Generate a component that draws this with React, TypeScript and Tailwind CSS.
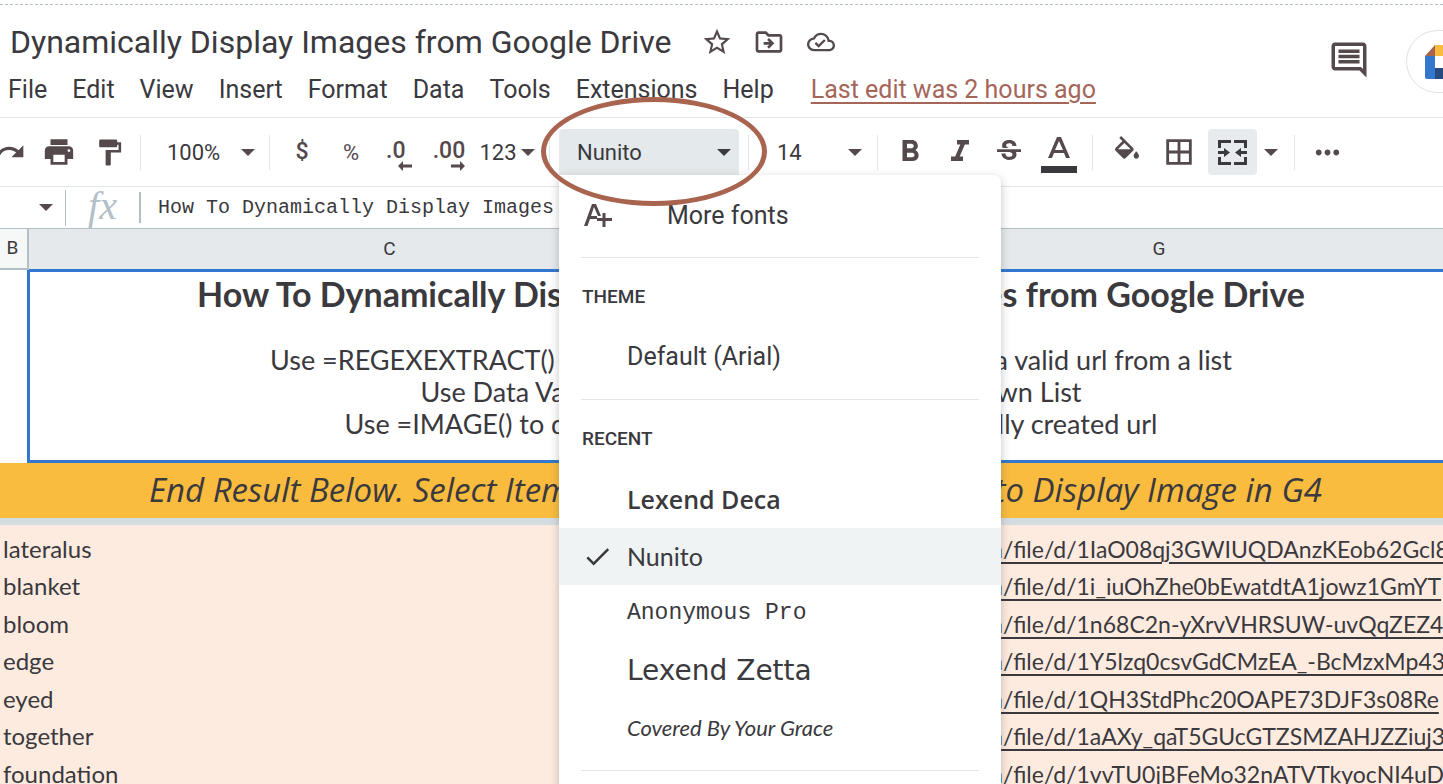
import type { ReactNode } from "react";
import {
  MdBorderAll,
  MdCheck,
  MdFormatBold,
  MdFormatItalic,
  MdFormatPaint,
  MdMoreHoriz,
  MdOutlineCloudDone,
  MdOutlineComment,
  MdOutlineDriveFileMove,
  MdPrint,
  MdRedo,
  MdStarBorder,
  MdStrikethroughS,
} from "react-icons/md";

const menus = ["File", "Edit", "View", "Insert", "Format", "Data", "Tools", "Extensions", "Help"];

const rows = [
  ["lateralus", "https://drive.google.com", "/file/d/1IaO08qj3GWIUQDAnzKEob62Gcl8"],
  ["blanket", "https://drive.google.com", "/file/d/1i_iuOhZhe0bEwatdtA1jowz1GmYT"],
  ["bloom", "https://drive.google.com", "/file/d/1n68C2n-yXrvVHRSUW-uvQqZEZ4"],
  ["edge", "https://drive.google.com", "/file/d/1Y5lzq0csvGdCMzEA_-BcMzxMp43"],
  ["eyed", "https://drive.google.com", "/file/d/1QH3StdPhc20OAPE73DJF3s08Re"],
  ["together", "https://drive.google.com", "/file/d/1aAXy_qaT5GUcGTZSMZAHJZZiuj3"],
  ["foundation", "https://drive.google.com", "/file/d/1vvTU0jBFeMo32nATVTkyocNI4uD"],
];

function Caret({ className = "" }: { className?: string }) {
  return (
    <svg viewBox="0 0 14 7" aria-hidden="true" className={`h-[7px] w-3.5 shrink-0 fill-current ${className}`}>
      <path d="M0 0h14L7 7z" />
    </svg>
  );
}

function Tool({ label, className, children }: { label: string; className: string; children: ReactNode }) {
  return (
    <button type="button" aria-label={label} className={`flex h-[46px] shrink-0 items-center justify-center ${className}`}>
      {children}
    </button>
  );
}

function Separator({ className }: { className: string }) {
  return (
    <div className={`flex shrink-0 justify-center ${className}`}>
      <div className="h-[35px] w-px bg-[#e1e6e8]" />
    </div>
  );
}

function ToolSelect({ label, value, className }: { label: string; value: string; className: string }) {
  return (
    <div className={`grid shrink-0 items-center ${className}`}>
      <select
        aria-label={label}
        defaultValue={value}
        className="col-start-1 row-start-1 w-full appearance-none bg-transparent pl-5 text-[22px] text-[#3a393e] outline-none"
      >
        <option>{value}</option>
      </select>
      <Caret className="pointer-events-none col-start-1 row-start-1 mr-2 justify-self-end" />
    </div>
  );
}

function Decimal({ digits, right = false }: { digits: string; right?: boolean }) {
  return (
    <span className="flex min-w-[26px] flex-col text-left">
      <span className="text-[23px] leading-5 font-medium">{digits}</span>
      <svg viewBox="0 0 14 10" aria-hidden="true" className={`h-2.5 w-3.5 self-end fill-current ${right ? "rotate-180" : ""}`}>
        <path d="M5 0v3.500h9v3H5V10L0 5z" />
      </svg>
    </span>
  );
}

function Header() {
  return (
    <header className="mt-1 flex justify-between border-t border-dashed border-[#b3bfc6] pt-[13px]">
      <div className="shrink-0 pb-1">
        <div className="flex h-12 items-center pl-2.5">
          <h1 className="text-[32px] leading-10 whitespace-nowrap">Dynamically Display Images from Google Drive</h1>
          <div className="ml-[30px] flex items-center gap-5 text-[#54494b]">
            <button type="button" aria-label="Star"><MdStarBorder className="size-8" /></button>
            <button type="button" aria-label="Move"><MdOutlineDriveFileMove className="size-8" /></button>
            <button type="button" aria-label="See document status" className="pl-0.5"><MdOutlineCloudDone className="size-7" /></button>
          </div>
        </div>
        <nav className="flex h-[47px] items-center gap-[25px] pl-2 text-[25px]">
          {menus.map((item) => (
            <button type="button" key={item}>{item}</button>
          ))}
          <a href="#history" className="ml-3 whitespace-nowrap text-[#a5665a] underline decoration-2 underline-offset-4">
            Last edit was 2 hours ago
          </a>
        </nav>
      </div>
      <div className="flex items-start gap-9 pt-3">
        <button type="button" aria-label="Open comment history" className="mt-[9px] text-[42px] text-[#54494b]">
          <MdOutlineComment />
        </button>
        <button
          type="button"
          aria-label="Join a call"
          className="-mr-[73px] flex h-[63px] w-[110px] shrink-0 items-center rounded-full border border-[#dde3e6] pl-[18px]"
        >
          <svg viewBox="0 0 42 34" aria-hidden="true" className="h-[34px] w-[42px]">
            <path fill="#a96450" d="M0 11 10 0v11z" />
            <path fill="#f9bc3f" d="M10 0h20v11H10z" />
            <path fill="#3377cf" d="M0 11h10v23H2a2 2 0 0 1-2-2z" />
            <path fill="#274b7f" d="M10 23h20v11H10z" />
            <path fill="#274b7f" d="M30 12 42 3v28l-12-9z" />
          </svg>
        </button>
      </div>
    </header>
  );
}

function Toolbar() {
  return (
    <div className="flex h-[70px] items-center overflow-hidden border-y border-[#e1e6e8] text-[#54494b]">
      <Tool label="Redo" className="w-[34px]">
        <MdRedo className="mr-3.5 size-8 shrink-0" />
      </Tool>
      <Tool label="Print" className="w-[50px]"><MdPrint className="size-[34px]" /></Tool>
      <Tool label="Paint format" className="w-[50px]"><MdFormatPaint className="size-[31px]" /></Tool>
      <Separator className="w-[13px]" />
      <ToolSelect label="Zoom" value="100%" className="w-[116px]" />
      <Separator className="w-[13px]" />
      <Tool label="Format as currency" className="w-[52px] text-[23px] font-medium">$</Tool>
      <Tool label="Format as percent" className="w-[46px] text-[22px]">%</Tool>
      <Tool label="Decrease decimal places" className="w-[50px] pt-2"><Decimal digits=".0" /></Tool>
      <Tool label="Increase decimal places" className="w-[50px] pt-2"><Decimal digits=".00" right /></Tool>
      <Tool label="More formats" className="w-[66px] gap-1 text-[22px] text-[#3a393e]">
        123
        <Caret className="text-[#54494b]" />
      </Tool>
      <Separator className="w-[19px]" />
      <button
        type="button"
        aria-haspopup="menu"
        aria-expanded="true"
        className="flex h-[46px] w-[180px] shrink-0 items-center justify-between rounded-t bg-[#e4e9eb] pr-2 pl-[18px] text-[22px] text-[#3a393e]"
      >
        Nunito
        <Caret />
      </button>
      <Separator className="w-[18px]" />
      <ToolSelect label="Font size" value="14" className="w-[113px]" />
      <Separator className="w-[15px]" />
      <Tool label="Bold" className="w-[50px]"><MdFormatBold className="size-9" /></Tool>
      <Tool label="Italic" className="w-[49px]"><MdFormatItalic className="size-9" /></Tool>
      <Tool label="Strikethrough" className="w-[49px]"><MdStrikethroughS className="size-8" /></Tool>
      <Tool label="Text color" className="w-[51px]">
        <svg viewBox="0 0 36 44" aria-hidden="true" className="h-11 w-9">
          <path fill="#54494b" d="M16 7h4l9 21h-4l-2-5H13l-2 5H7zm2 4-4 9h8z" />
          <path fill="#3a393e" d="M0 36h36v7H0z" />
        </svg>
      </Tool>
      <Separator className="w-[17px]" />
      <Tool label="Fill color" className="w-[51px]">
        <svg viewBox="0 0 24 24" aria-hidden="true" className="size-8 fill-current">
          <path d="M16.56 8.94 7.62 0 6.21 1.41l2.38 2.38-5.15 5.15a1.49 1.49 0 0 0 0 2.12l5.5 5.5c.29.29.68.44 1.06.44s.77-.15 1.06-.44l5.5-5.5c.59-.58.59-1.53 0-2.12zM5.21 10 10 5.21 14.79 10H5.21zM19 11.500s-2 2.17-2 3.500c0 1.100.9 2 2 2s2-.9 2-2c0-1.33-2-3.500-2-3.500z" />
        </svg>
      </Tool>
      <Tool label="Borders" className="w-[54px]"><MdBorderAll className="size-[34px]" /></Tool>
      <Tool label="Merge cells" className="ml-0.5 w-[49px] rounded bg-[#e7ebed] text-[#3a393e]">
        <svg viewBox="0 0 29 25" aria-hidden="true" className="h-[25px] w-[29px] fill-current">
          <path d="M0 0h13v3H3v5H0zM16 0h13v8h-3V3H16zM0 17h3v5h10v3H0zM26 17h3v8H16v-3h10zM0 11h6V8l6 4.500L6 17v-3H0zM29 11h-6V8l-6 4.500 6 4.500v-3h6z" />
        </svg>
      </Tool>
      <Tool label="Merge type" className="w-7"><Caret /></Tool>
      <Separator className="w-[19px]" />
      <Tool label="More" className="w-[46px]"><MdMoreHoriz className="size-[35px]" /></Tool>
    </div>
  );
}

function FormulaBar() {
  return (
    <div className="flex h-[41px] items-center text-[#54494b]">
      <button type="button" aria-label="Name box" className="flex h-9 w-[66px] shrink-0 items-center justify-end border-r border-[#b3bfc6] pr-3">
        <Caret />
      </button>
      <label
        htmlFor="formula"
        className="flex h-[31px] w-[75px] shrink-0 items-center justify-center border-r-2 border-[#b3bfc6] pb-1 font-['Liberation_Serif',serif] text-[40px] leading-6 text-[#b3bfc6] italic"
      >
        fx
      </label>
      <input
        id="formula"
        defaultValue="How To Dynamically Display Images from Google Drive"
        className="min-w-0 flex-1 bg-transparent pl-[17px] font-['Liberation_Mono',monospace] text-xl text-[#3a393e] outline-none"
      />
    </div>
  );
}

function Line({ start, end, className }: { start: string; end: string; className: string }) {
  return (
    <p className={`mx-auto flex justify-between whitespace-nowrap ${className}`}>
      <span>{start}</span>
      <span>{end}</span>
    </p>
  );
}

function Sheet() {
  return (
    <main className="font-[Lato,sans-serif]">
      <table className="w-full table-fixed border-collapse">
        <colgroup>
          <col className="w-7" />
          <col className="w-[722px]" />
          <col className="w-[125px]" />
          <col />
        </colgroup>
        <thead className="font-[Roboto,sans-serif] text-[19px]">
          <tr className="h-10 border-t border-[#b3bfc6] bg-[#e5e9eb]">
            <th className="border-r-2 border-b-2 border-[#b3bfc6] bg-[#f6f8f8] p-0 pr-0.5 font-normal">B</th>
            <th className="p-0 font-normal">C</th>
            <th className="p-0" />
            <th className="p-0 font-normal">G</th>
          </tr>
        </thead>
        <tbody>
          <tr>
            <td className="p-0" />
            <td colSpan={3} className="p-0">
              <div className="-mr-1 -ml-px h-[194px] border-3 border-[#3377cf] pl-7">
                <Line start="How To Dynamically Display" end="Images from Google Drive" className="w-[1108px] text-[34px] leading-11 font-bold" />
                <div className="mt-7 text-[27px] leading-8">
                  <Line start="Use =REGEXEXTRACT() and" end="to create a valid url from a list" className="w-[962px]" />
                  <Line start="Use Data Validation" end="Drop Down List" className="w-[661px]" />
                  <Line start="Use =IMAGE() to display" end="dynamically created url" className="w-[813px]" />
                </div>
              </div>
            </td>
          </tr>
          <tr className="h-[55px] bg-[#f9bc3f]">
            <td colSpan={4} className="p-0 pl-7">
              <Line
                start="End Result Below. Select Item"
                end="to Display Image in G4"
                className="w-[1173px] font-['Open_Sans',sans-serif] text-[33px] leading-10 italic"
              />
            </td>
          </tr>
          <tr className="h-[7px] bg-[#d5dce0]">
            <td colSpan={4} className="p-0" />
          </tr>
        </tbody>
      </table>
      <table className="w-full table-fixed border-collapse bg-[#feebdf]">
        <tbody>
          {rows.map(([name, host, path]) => (
            <tr key={name} className="odd:h-[38px] even:h-[37px]">
              <td className="w-[560px] p-0 pt-2.5 pl-[3px] text-2xl leading-6">{name}</td>
              <td className="p-0 pt-2.5 text-[23px] leading-6">
                <a href={host + path} className="flex whitespace-nowrap underline decoration-2 underline-offset-4">
                  <span className="w-[443px] shrink-0 text-right">{host}</span>
                  <span>{path}</span>
                </a>
              </td>
            </tr>
          ))}
        </tbody>
      </table>
    </main>
  );
}

function FontItem({ name, className, checked = false }: { name: string; className: string; checked?: boolean }) {
  return (
    <button
      type="button"
      role="menuitemradio"
      aria-checked={checked}
      className={`flex h-[57px] w-full items-center text-left ${checked ? "bg-[#f0f3f4]" : ""}`}
    >
      <span className="flex w-[68px] justify-center pl-2">{checked && <MdCheck className="size-[31px]" />}</span>
      <span className={`whitespace-nowrap ${className}`}>{name}</span>
    </button>
  );
}

function FontMenu() {
  return (
    <div role="menu" className="absolute top-[175px] left-[559px] w-[442px] rounded-tr-lg bg-white pt-3 pb-16 shadow-[0_3px_10px_rgba(60,64,67,0.3)]">
      <button type="button" role="menuitem" className="flex h-[57px] w-full items-center pl-[25px] text-[25px]">
        <svg viewBox="0 0 28 23" aria-hidden="true" className="mr-[55px] h-[23px] w-7 fill-[#54494b]">
          <path d="M8 0h4l5 12h-3L10 3 7 12h6v3H6l-2.500 7H0zM18.500 9h3v5H28v3h-6.500v6h-3v-6H13v-3h5.500z" />
        </svg>
        More fonts
      </button>
      <div className="mx-[22px] mt-[13px] border-t border-[#e1e6e8]" />
      <h2 className="flex h-[70px] items-center pt-2 pl-[23px] text-[19px] font-medium">THEME</h2>
      <FontItem name="Default (Arial)" className="text-[25px]" />
      <div className="mx-[22px] mt-3.5 border-t border-[#e1e6e8]" />
      <h2 className="flex h-[71px] items-center pt-2 pl-[23px] text-[19px] font-medium">RECENT</h2>
      <FontItem name="Lexend Deca" className="font-['Open_Sans',sans-serif] text-[25px] font-semibold" />
      <FontItem name="Nunito" className="font-[Lato,sans-serif] text-[25px]" checked />
      <FontItem name="Anonymous Pro" className="font-['Liberation_Mono',monospace] text-[23px]" />
      <FontItem name="Lexend Zetta" className="font-['DejaVu_Sans',sans-serif] text-[28px]" />
      <FontItem name="Covered By Your Grace" className="font-[Lato,sans-serif] text-[22px] italic" />
      <div className="mx-[22px] mt-3.5 border-t border-[#e1e6e8]" />
    </div>
  );
}

export default function App() {
  return (
    <div className="relative flow-root h-screen overflow-hidden bg-white font-[Roboto,sans-serif] text-[#3a393e]">
      <Header />
      <Toolbar />
      <FormulaBar />
      <Sheet />
      <FontMenu />
      <div className="pointer-events-none absolute top-[97px] left-[541px] h-[109px] w-[226px] rounded-[50%] border-5 border-[#a96450]" />
    </div>
  );
}
